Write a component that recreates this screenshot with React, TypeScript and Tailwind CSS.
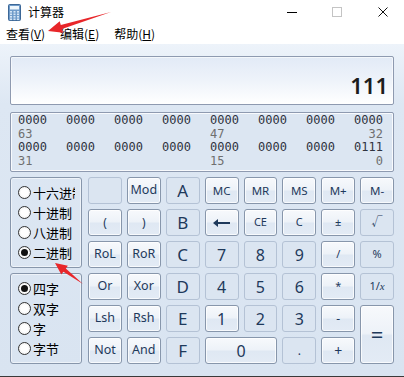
import React from "react";

const ui = "font-['Noto_Sans','Noto_Sans_CJK_SC',sans-serif]";
const cjk = "font-['Noto_Sans_CJK_SC','Noto_Sans',sans-serif]";

type B = { t?: React.ReactNode; on?: boolean; s?: string; span?: string };

function Btn({ t, on, s = "text-[12px]", span = "" }: B) {
  return (
    <div
      className={`${span} flex items-center justify-center rounded-[3px] border text-[#1e395b] ${s} ${
        on
          ? "border-[#8796ab] bg-[linear-gradient(to_bottom,#f7f9fc_0%,#edf2f8_48%,#dfe8f3_52%,#e3ebf5_100%)] shadow-[inset_0_0_0_1px_rgba(255,255,255,0.75)]"
          : "border-[#b4c2d5] bg-[#dbe5f1]"
      }`}
    >
      {t}
    </div>
  );
}

function Radio({ label, on }: { label: string; on?: boolean }) {
  return (
    <div className="flex h-5 w-[57px] items-center overflow-hidden whitespace-nowrap">
      <div className="flex h-[13px] w-[13px] shrink-0 items-center justify-center rounded-full border border-[#333] bg-[radial-gradient(circle,#ffffff_40%,#e6e6e6_100%)]">
        {on && <div className="h-[7px] w-[7px] rounded-full bg-[#111]" />}
      </div>
      <span className={`${cjk} ml-[2px] text-[13px] leading-none text-black`}>{label}</span>
    </div>
  );
}

function Back() {
  return (
    <svg width="17" height="8" viewBox="0 0 17 8">
      <polygon points="0,4 5,0 5,8" fill="#1e395b" />
      <rect x="4" y="3" width="13" height="2" fill="#1e395b" />
    </svg>
  );
}

const bits = ["0000", "0000", "0000", "0000", "0000", "0000", "0000"];

export default function App() {
  return (
    <div className={`${ui} relative h-[377px] w-[404px] overflow-hidden bg-white`}>
      {/* title bar */}
      <div className="flex h-6 items-center">
        <svg className="ml-2" width="13" height="17" viewBox="0 0 13 17">
          <rect x="0.5" y="0.5" width="12" height="16" rx="1" fill="#6f9bc9" stroke="#3c6797" />
          <rect x="2" y="2" width="9" height="3.5" fill="#eef6fc" />
          {[7, 9.5, 12, 14.5].map((y) =>
            [2, 5.5, 9].map((x) => (
              <rect key={`${x}-${y}`} x={x} y={y} width="2" height="1.6" fill="#d6e6f5" />
            ))
          )}
        </svg>
        <span className={`${cjk} ml-[7px] text-[12px] text-black`}>计算器</span>
        <div className="ml-auto flex h-full items-center">
          <div className="mr-[35px] h-px w-[10px] bg-black" />
          <div className="mr-[36px] h-[10px] w-[10px] border border-[#c4c4c4]" />
          <svg className="mr-[16px]" width="10" height="10" viewBox="0 0 10 10">
            <path d="M0.5 0.5 L9.5 9.5 M9.5 0.5 L0.5 9.5" stroke="#111" strokeWidth="1" />
          </svg>
        </div>
      </div>

      {/* menu */}
      <div className={`${cjk} flex h-5 items-center gap-[15px] pl-[6px] text-[12px] text-black`}>
        <span>查看(<span className="underline">V</span>)</span>
        <span>编辑(<span className="underline">E</span>)</span>
        <span>帮助(<span className="underline">H</span>)</span>
      </div>

      {/* body */}
      <div className="h-[332px] bg-[linear-gradient(to_bottom,#edf3fa_0px,#dde7f3_60px,#d9e4f1_100%)] px-[10px] pt-3">
        <div className="flex h-[49px] items-end justify-end rounded-[2px] border border-[#8e9ab0] bg-[linear-gradient(to_bottom,#e2eaf6_0%,#eef3fa_50%,#ffffff_100%)] pb-[6px] pr-[5px] shadow-[inset_0_0_0_1px_rgba(255,255,255,0.6)]">
          <span className="text-[22px] font-semibold leading-[26px] text-[#1c1c1c]">111</span>
        </div>

        <div className="mt-[7px] h-[60px] rounded-[2px] border border-[#8e9ab0] bg-[#dce6f2] pl-[7px] pt-px shadow-[inset_0_0_0_1px_rgba(255,255,255,0.8)] font-['DejaVu_Sans_Mono',monospace] text-[12px] leading-[13.5px]">
          <div className="grid grid-cols-[repeat(8,29px)] gap-x-[19px] text-[#2f3340]">
            {bits.map((b, i) => (
              <span key={i}>{b}</span>
            ))}
            <span>0000</span>
          </div>
          <div className="grid grid-cols-[repeat(8,29px)] gap-x-[19px] text-[#6f6f6f]">
            <span>63</span><span /><span /><span /><span>47</span><span /><span /><span className="text-right">32</span>
          </div>
          <div className="grid grid-cols-[repeat(8,29px)] gap-x-[19px] text-[#2f3340]">
            {bits.map((b, i) => (
              <span key={i}>{b}</span>
            ))}
            <span>0111</span>
          </div>
          <div className="grid grid-cols-[repeat(8,29px)] gap-x-[19px] text-[#6f6f6f]">
            <span>31</span><span /><span /><span /><span>15</span><span /><span /><span className="text-right">0</span>
          </div>
        </div>

        <div className="mt-[5px] grid grid-cols-[73px_repeat(8,minmax(0,1fr))] grid-rows-[repeat(6,27px)] gap-[5px]">
          <div className="row-span-3 flex w-[72px] flex-col justify-center rounded-[3px] border border-[#8796ab] pl-[7px] shadow-[inset_0_0_0_1px_rgba(255,255,255,0.5)]">
            <Radio label="十六进制" />
            <Radio label="十进制" />
            <Radio label="八进制" />
            <Radio label="二进制" on />
          </div>
          <Btn />
          <Btn t="Mod" on s="text-[12.5px]" />
          <Btn t="A" s="text-[17px]" />
          <Btn t="MC" on s="text-[11.5px]" />
          <Btn t="MR" on s="text-[11.5px]" />
          <Btn t="MS" on s="text-[11.5px]" />
          <Btn t="M+" on s="text-[11.5px]" />
          <Btn t="M-" on s="text-[11.5px]" />

          <Btn t="(" on />
          <Btn t=")" on />
          <Btn t="B" s="text-[17px]" />
          <Btn t={<Back />} on />
          <Btn t="CE" on s="text-[11px]" />
          <Btn t="C" on s="text-[11px]" />
          <Btn t="±" on s="text-[11px]" />
          <Btn t="√" s="text-[11px]" />

          <Btn t="RoL" on s="text-[12.5px]" />
          <Btn t="RoR" on s="text-[12.5px]" />
          <Btn t="C" s="text-[17px]" />
          <Btn t="7" s="text-[16px]" />
          <Btn t="8" s="text-[16px]" />
          <Btn t="9" s="text-[16px]" />
          <Btn t="/" on s="text-[11px]" />
          <Btn t="%" s="text-[11px]" />

          <div className="row-span-3 flex w-[72px] flex-col justify-center rounded-[3px] border border-[#8796ab] pl-[7px] shadow-[inset_0_0_0_1px_rgba(255,255,255,0.5)]">
            <Radio label="四字" on />
            <Radio label="双字" />
            <Radio label="字" />
            <Radio label="字节" />
          </div>
          <Btn t="Or" on s="text-[12.5px]" />
          <Btn t="Xor" on s="text-[12.5px]" />
          <Btn t="D" s="text-[17px]" />
          <Btn t="4" s="text-[16px]" />
          <Btn t="5" s="text-[16px]" />
          <Btn t="6" s="text-[16px]" />
          <Btn t="*" on s="text-[11px]" />
          <Btn
            t={
              <span>
                1/<span className="font-['Liberation_Serif',serif] italic">x</span>
              </span>
            }
            s="text-[11px]"
          />

          <Btn t="Lsh" on s="text-[12.5px]" />
          <Btn t="Rsh" on s="text-[12.5px]" />
          <Btn t="E" s="text-[17px]" />
          <Btn t="1" on s="text-[16px]" />
          <Btn t="2" s="text-[16px]" />
          <Btn t="3" s="text-[16px]" />
          <Btn t="-" on s="text-[12px]" />
          <Btn t="=" on s="text-[22px]" span="row-span-2" />

          <Btn t="Not" on s="text-[12.5px]" />
          <Btn t="And" on s="text-[12.5px]" />
          <Btn t="F" s="text-[17px]" />
          <Btn t="0" on s="text-[16px]" span="col-span-2" />
          <Btn t="." s="text-[12px]" />
          <Btn t="+" on s="text-[14px]" />
        </div>
      </div>
      <div className="h-px bg-[#3a3a3a]" />

      {/* annotation arrows */}
      <svg className="pointer-events-none absolute left-0 top-0" width="404" height="377">
        <polygon
          points="111,12 60.8,25 59.7,21.2 48,31 63.1,32.7 62,28.9"
          fill="#e8262a"
        />
        <polygon
          points="83,284 65.8,268.6 67.9,265.8 55,263 61.3,274.6 63.4,271.8"
          fill="#e8262a"
        />
      </svg>
    </div>
  );
}
